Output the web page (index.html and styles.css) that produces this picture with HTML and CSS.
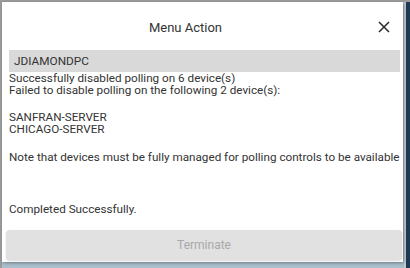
FILE: index.html
```html
<!DOCTYPE html>
<html>
<head>
<meta charset="utf-8">
<link rel="stylesheet" href="styles.css">
</head>
<body>
<div class="desktop">
  <div class="main-col">
    <div class="dialog">
      <div class="dialog-header">
        <span class="title">Menu Action</span>
        <span class="close" aria-label="Close">
          <svg width="12" height="12" viewBox="0 0 12 12"><path d="M1 1 L11 11 M11 1 L1 11" stroke="#2b2b2b" stroke-width="1.5" fill="none"/></svg>
        </span>
      </div>
      <div class="dialog-body">
        <div class="device-bar">JDIAMONDPC</div>
        <div class="block">
          <div class="line">Successfully disabled polling on 6 device(s)</div>
          <div class="line">Failed to disable polling on the following 2 device(s):</div>
        </div>
        <div class="block gap">
          <div class="line">SANFRAN-SERVER</div>
          <div class="line">CHICAGO-SERVER</div>
        </div>
        <div class="block gap2">
          <div class="line">Note that devices must be fully managed for polling controls to be available</div>
        </div>
        <div class="block gap3">
          <div class="line">Completed Successfully.</div>
        </div>
      </div>
      <div class="dialog-footer">
        <button class="btn" disabled>Terminate</button>
      </div>
    </div>
    <div class="bottom-fill"></div>
  </div>
  <div class="right-edge"></div>
</div>
</body>
</html>
```
FILE: styles.css
```css
html, body {
  margin: 0;
  padding: 0;
}
body {
  width: 410px;
  height: 268px;
  overflow: hidden;
  font-family: Roboto, "Liberation Sans", sans-serif;
  color: #333;
}
.desktop {
  display: flex;
  width: 410px;
  height: 268px;
  background: #a9bfcc;
  border-top: 2px solid #9c9c9c;
  box-sizing: border-box;
}
.main-col {
  display: flex;
  flex-direction: column;
  width: 404px;
  border-left: 2px solid #9c9c9c;
  box-sizing: border-box;
  background: #a9bfcc;
}
.dialog {
  width: 401px;
  height: 260px;
  background: #fff;
  box-shadow: 1px 1px 3px rgba(0,0,0,0.35);
  display: flex;
  flex-direction: column;
  position: relative;
  z-index: 1;
}
.bottom-fill {
  flex: 1;
}
.right-edge {
  width: 6px;
  background: linear-gradient(to right, #c8c8c8 0, #c8c8c8 2px, #1d3a57 2px);
}
.dialog-header {
  height: 48px;
  display: flex;
  align-items: center;
  justify-content: center;
  position: relative;
}
.title {
  font-size: 13px;
  color: #333;
  margin-left: -34px;
  margin-top: 2px;
}
.close {
  position: absolute;
  right: 13px;
  top: 19px;
  width: 12px;
  height: 12px;
  display: flex;
}
.dialog-body {
  padding: 0 3px 0 7px;
  font-size: 11.7px;
  line-height: 12px;
  flex: 1;
}
.device-bar {
  background: #d9d9d9;
  height: 22px;
  line-height: 22px;
  padding-left: 5px;
  font-size: 11.8px;
  color: #333;
}
.line {
  white-space: nowrap;
}
.gap { margin-top: 15px; }
.gap2 { margin-top: 16px; }
.gap3 { margin-top: 40px; }
.dialog-footer {
  padding: 0 1px 2px 4px;
}
.btn {
  width: 100%;
  height: 30px;
  border: none;
  border-radius: 4px;
  background: #e1e1e1;
  color: #a9a9a9;
  font-family: Roboto, "Liberation Sans", sans-serif;
  font-size: 12px;
  box-shadow: 0 1px 2px rgba(0,0,0,0.15);
}
```
